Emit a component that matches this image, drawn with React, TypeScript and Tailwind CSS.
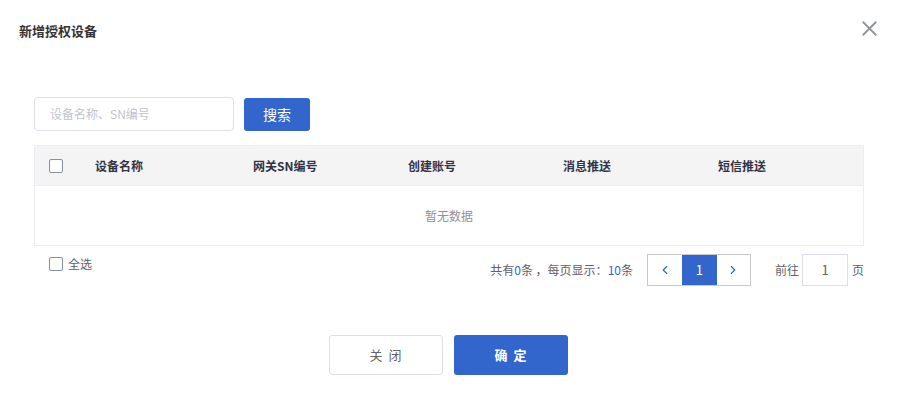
import { ChevronLeft, ChevronRight, X } from "lucide-react";

const columns = ["设备名称", "网关SN编号", "创建账号", "消息推送", "短信推送"];

function CheckBox() {
  return <span className="inline-block w-[14px] h-[14px] rounded-[2px] border border-[#8a8f9c] bg-white" />;
}

export default function App() {
  return (
    <div
      className="w-[898px] h-[394px] bg-white text-[#333] overflow-hidden"
      style={{ fontFamily: '"Noto Sans CJK SC", "Noto Sans", sans-serif' }}
    >
      <div className="flex items-start justify-between pl-[19px] pr-[16px] pt-[21px] h-[97px]">
        <h2 className="text-[13px] leading-[20px] font-bold text-[#333]">新增授权设备</h2>
        <X size={25} strokeWidth={1.7} className="text-[#909399] -mt-[5px]" />
      </div>

      <div className="px-[34px]">
        <div className="flex items-center gap-[10px]">
          <div className="w-[200px] h-[34px] border border-[#dcdfe6] rounded-[4px] flex items-center px-[15px] text-[12px] text-[#c0c4cc]">
            设备名称、SN编号
          </div>
          <button className="w-[66px] h-[33px] rounded-[3px] bg-[#3366cc] text-white text-[14px]">搜索</button>
        </div>

        <div className="mt-[14px] border border-[#ebeef5]">
          <div className="flex items-center h-[40px] bg-[#f4f4f5] border-b border-[#ebeef5] text-[12px] font-bold text-[#303346]">
            <div className="w-[60px] pl-[14px] flex items-center">
              <CheckBox />
            </div>
            <div className="w-[158px]">{columns[0]}</div>
            <div className="w-[155px]">{columns[1]}</div>
            <div className="w-[155px]">{columns[2]}</div>
            <div className="w-[155px]">{columns[3]}</div>
            <div className="flex-1">{columns[4]}</div>
          </div>
          <div className="h-[59px] flex items-center justify-center text-[12px] text-[#909399]">暂无数据</div>
        </div>

        <div className="flex items-start justify-between mt-[8px]">
          <label className="flex items-center gap-[5px] pl-[15px] pt-[1px] text-[12px] text-[#606266]">
            <CheckBox />
            全选
          </label>
          <div className="flex items-center text-[12px] text-[#606266]">
            <span className="mr-[14px]">
              共有<span className="text-[#3366cc]">0</span>条 ，每页显示：<span className="text-[#3366cc]">10</span>条
            </span>
            <div className="flex h-[32px] border border-[#c8c9cc]">
              <div className="w-[34px] flex items-center justify-center text-[#3366cc]">
                <ChevronLeft size={14} strokeWidth={2} />
              </div>
              <div className="w-[35px] flex items-center justify-center bg-[#3366cc] text-white text-[13px]">1</div>
              <div className="w-[33px] flex items-center justify-center text-[#3366cc]">
                <ChevronRight size={14} strokeWidth={2} />
              </div>
            </div>
            <span className="ml-[24px] mr-[3px]">前往</span>
            <div className="w-[46px] h-[32px] border border-[#dcdfe6] flex items-center justify-center text-[13px]">1</div>
            <span className="ml-[4px]">页</span>
          </div>
        </div>
      </div>

      <div className="flex justify-center gap-[11px] mt-[49px] pr-[2px]">
        <button className="w-[114px] h-[40px] rounded-[3px] border border-[#dcdfe6] bg-white text-[13px] text-[#606266] tracking-[6px] pl-[6px]">
          关闭
        </button>
        <button className="w-[114px] h-[40px] rounded-[3px] bg-[#3366cc] text-white text-[13px] font-bold tracking-[6px] pl-[6px]">
          确定
        </button>
      </div>
    </div>
  );
}
